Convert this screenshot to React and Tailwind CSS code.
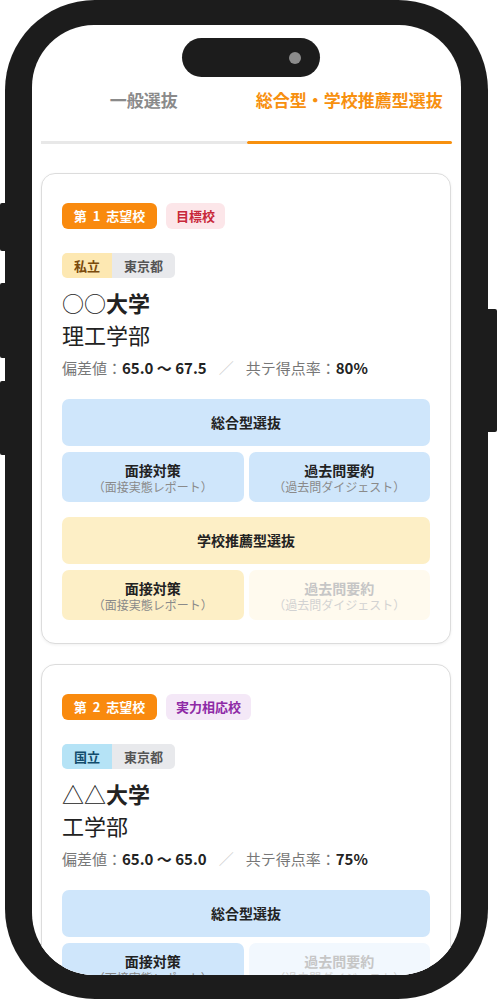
import React from 'react';

const font = { fontFamily: '"Noto Sans CJK JP", "Noto Sans", sans-serif' };

const schools = [
  {
    rank: 1,
    level: '目標校',
    levelClass: 'bg-[#fce6e9] text-[#c8283a]',
    type: '私立',
    typeClass: 'bg-[#fde8b2] text-[#7a4a0c]',
    pref: '東京都',
    mark: '○○',
    faculty: '理工学部',
    score: '65.0 〜 67.5',
    rate: '80%',
    groups: [
      {
        name: '総合型選抜',
        bg: 'bg-[#cfe6fb]',
        off: 'bg-[#f2f8fe]',
        items: [true, true],
      },
      {
        name: '学校推薦型選抜',
        bg: 'bg-[#fdefc6]',
        off: 'bg-[#fffaee]',
        items: [true, false],
      },
    ],
  },
  {
    rank: 2,
    level: '実力相応校',
    levelClass: 'bg-[#f4e8f7] text-[#8e2aa6]',
    type: '国立',
    typeClass: 'bg-[#b5e3f6] text-[#124c6c]',
    pref: '東京都',
    mark: '△△',
    faculty: '工学部',
    score: '65.0 〜 65.0',
    rate: '75%',
    groups: [
      {
        name: '総合型選抜',
        bg: 'bg-[#cfe6fb]',
        off: 'bg-[#f2f8fe]',
        items: [true, false],
      },
    ],
  },
];

const items = [
  { title: '面接対策', sub: '（面接実態レポート）' },
  { title: '過去問要約', sub: '（過去問ダイジェスト）' },
];

const Group = ({ group }) => (
  <div className="flex flex-col gap-[6px]">
    <div className={`h-[47px] rounded-[7px] ${group.bg} flex items-center justify-center text-[14px] font-bold text-[#222]`}>
      {group.name}
    </div>
    <div className="grid grid-cols-2 gap-[5px]">
      {items.map((it, i) => {
        const on = group.items[i];
        return (
          <div
            key={it.title}
            className={`h-[50px] rounded-[7px] flex flex-col items-center justify-center ${on ? group.bg : group.off}`}
          >
            <span className={`text-[14px] leading-[20px] font-bold ${on ? 'text-[#222]' : 'text-[#c6c6c6]'}`}>
              {it.title}
            </span>
            <span className={`text-[12px] leading-[14px] ${on ? 'text-[#8a8a8a]' : 'text-[#d2d2d2]'}`}>
              {it.sub}
            </span>
          </div>
        );
      })}
    </div>
  </div>
);

const SchoolCard = ({ s }) => (
  <div className="w-[410px] shrink-0 rounded-[14px] border border-[#dcdcdc] bg-white shadow-[0_1px_3px_rgba(0,0,0,0.06)] px-[20px] pt-[29px] pb-[23px]">
    <div className="flex gap-[9px]">
      <span className="w-[95px] h-[26px] rounded-[6px] bg-[#f98a0e] text-white text-[13px] font-bold flex items-center justify-center">
        第&nbsp;&nbsp;{s.rank}&nbsp;&nbsp;志望校
      </span>
      <span className={`h-[26px] px-[10px] rounded-[6px] text-[13px] font-bold flex items-center ${s.levelClass}`}>
        {s.level}
      </span>
    </div>
    <div className="mt-[24px] flex">
      <div className="flex h-[25px] rounded-[5px] overflow-hidden text-[13px] font-bold">
        <span className={`px-[12px] flex items-center ${s.typeClass}`}>{s.type}</span>
        <span className="px-[12px] flex items-center bg-[#e8e9ec] text-[#555]">{s.pref}</span>
      </div>
    </div>
    <div className="mt-[9px] text-[22px] leading-[30px] text-[#222]">
      <span className="font-normal">{s.mark}</span>
      <span className="font-bold">大学</span>
    </div>
    <div className="mt-[2px] text-[22px] leading-[30px] text-[#222]">{s.faculty}</div>
    <div className="mt-[7px] text-[15px] leading-[24px] text-[#777] flex items-center">
      <span>偏差値：</span>
      <span className="font-bold text-[#222]">{s.score}</span>
      <span className="mx-[12px] text-[#d0d0d0]">／</span>
      <span>共テ得点率：</span>
      <span className="font-bold text-[#222]">{s.rate}</span>
    </div>
    <div className="mt-[19px] flex flex-col gap-[15px]">
      {s.groups.map((g) => (
        <Group key={g.name} group={g} />
      ))}
    </div>
  </div>
);

export default function App() {
  return (
    <div className="w-[498px] h-[1000px] bg-white overflow-hidden" style={font}>
      <div className="relative ml-[5px] w-[483px] h-[999px] rounded-[90px] bg-[#1c1c1c] px-[27px] pt-[25px] pb-[24px]">
        <div className="absolute left-[-5px] top-[203px] w-[6px] h-[48px] rounded-l-[2px] bg-[#1c1c1c]" />
        <div className="absolute left-[-5px] top-[283px] w-[6px] h-[75px] rounded-l-[2px] bg-[#1c1c1c]" />
        <div className="absolute left-[-5px] top-[381px] w-[6px] h-[74px] rounded-l-[2px] bg-[#1c1c1c]" />
        <div className="absolute right-[-9px] top-[309px] w-[10px] h-[123px] rounded-r-[2px] bg-[#1c1c1c]" />
        <div className="h-full rounded-[62px] bg-white overflow-hidden flex flex-col">
          <div className="mt-[13px] ml-[150px] w-[138px] h-[39px] shrink-0 rounded-full bg-[#1c1c1c] flex items-center justify-end pr-[19px]">
            <span className="w-[12px] h-[12px] rounded-full bg-[#8c8c8c]" />
          </div>
          <div className="px-[9px] flex flex-col">
            <div className="grid grid-cols-2 w-[411px]">
              <div className="flex flex-col">
                <div className="pt-[11px] pb-[29px] text-center text-[17px] leading-[24px] font-bold text-[#8a8a8a]">
                  一般選抜
                </div>
                <div className="h-[3px] bg-[#e8e8e8]" />
              </div>
              <div className="flex flex-col">
                <div className="pt-[11px] pb-[29px] text-center text-[17px] leading-[24px] font-bold text-[#f7900f]">
                  総合型・学校推薦型選抜
                </div>
                <div className="h-[3px] rounded-full bg-[#f7900f]" />
              </div>
            </div>
            <div className="mt-[29px] flex flex-col gap-[20px]">
              {schools.map((s) => (
                <SchoolCard key={s.rank} s={s} />
              ))}
            </div>
          </div>
        </div>
      </div>
    </div>
  );
}
